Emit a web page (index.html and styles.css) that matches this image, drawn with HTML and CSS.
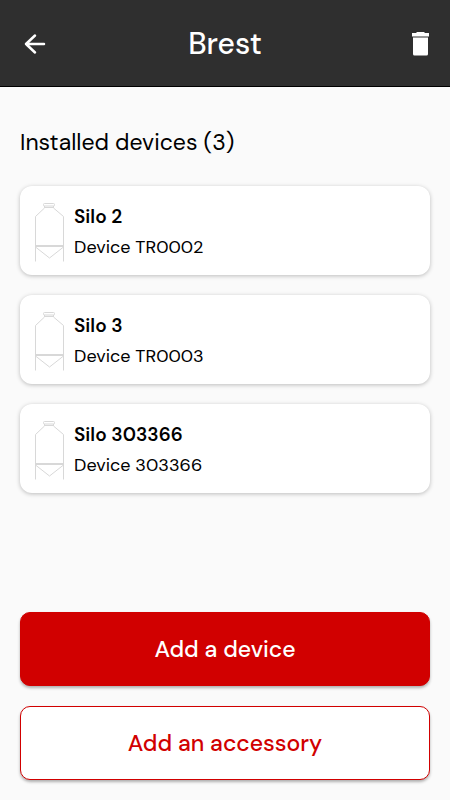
FILE: index.html
```html
<!DOCTYPE html>
<html lang="en">
<head>
    <meta charset="UTF-8">
    <meta name="viewport" content="width=device-width, initial-scale=1.0">
    <title>Brest</title>
    <link rel="stylesheet" href="styles.css">
</head>
<body>
    <!-- Silo drawing shared by the device cards -->
    <svg class="symbols" aria-hidden="true">
        <symbol id="silo" viewBox="0 0 30 60">
            <rect x="9.5" y="1.5" width="11" height="2.5" rx="1"/>
            <path d="M10.5 4v2L1.5 14.500V59.500M19.500 4v2L29.500 14.500V59.500M10.500 5.500h9"/>
            <path d="M1.500 45l14 11 14-11"/>
            <path class="ring" d="M1 44h29"/>
        </symbol>
    </svg>

    <header class="header">
        <a href="#" class="icon-btn" aria-label="Back">
            <svg class="icon" viewBox="0 0 24 24">
                <path class="arrow" d="M21 12H3M12 3.500L3 12l9 8.500"/>
            </svg>
        </a>
        <h1>Brest</h1>
        <button type="button" class="icon-btn" aria-label="Delete">
            <svg class="icon" viewBox="0 0 24 24">
                <path d="M9 0h7l1 1h4v3.500H4V1h4zM5 5.500h15V22q0 1.500-1.500 1.500h-12Q5 23.500 5 22z"/>
            </svg>
        </button>
    </header>

    <main class="content">
        <h2>Installed devices (3)</h2>
        <ul class="device-list">
            <li>
                <a href="#" class="device-card">
                    <svg class="silo"><use href="#silo"/></svg>
                    <span class="device-info">
                        <span class="device-name">Silo 2</span>
                        <span class="device-id">Device TR0002</span>
                    </span>
                </a>
            </li>
            <li>
                <a href="#" class="device-card">
                    <svg class="silo"><use href="#silo"/></svg>
                    <span class="device-info">
                        <span class="device-name">Silo 3</span>
                        <span class="device-id">Device TR0003</span>
                    </span>
                </a>
            </li>
            <li>
                <a href="#" class="device-card">
                    <svg class="silo"><use href="#silo"/></svg>
                    <span class="device-info">
                        <span class="device-name">Silo 303366</span>
                        <span class="device-id">Device 303366</span>
                    </span>
                </a>
            </li>
        </ul>
    </main>

    <footer class="actions">
        <button type="button" class="btn btn-primary">Add a device</button>
        <button type="button" class="btn btn-outline">Add an accessory</button>
    </footer>
</body>
</html>
```

FILE: styles.css
```css
* {
    box-sizing: border-box;
}
body {
    margin: 0;
    min-height: 100vh;
    display: flex;
    flex-direction: column;
    font-family: "DM Sans", Inter, sans-serif;
    background-color: #fafafa;
    color: #000;
}
.symbols {
    display: none;
}
.header {
    display: grid;
    grid-template-columns: 1fr auto 1fr;
    align-items: center;
    padding: 24px 14px 22px;
    background-color: #2f2f2f;
    border-bottom: 1px solid #000;
    color: #fff;
}
.header h1 {
    margin: 0;
    font-size: 30px;
    line-height: 40px;
    font-weight: 500;
}
.icon-btn {
    display: flex;
    padding: 5px 4px 5px 9px;
    border: none;
    background: none;
    color: inherit;
    cursor: pointer;
}
.icon-btn:last-child {
    justify-self: end;
}
.icon {
    width: 24px;
    height: 24px;
    fill: currentColor;
}
.arrow {
    fill: none;
    stroke: currentColor;
    stroke-width: 2.5;
    stroke-linecap: round;
    stroke-linejoin: round;
}
.content {
    flex-grow: 1;
    padding: 40px 20px 20px;
}
.content h2 {
    margin: 0 0 29px;
    font-size: 23px;
    line-height: 30px;
    font-weight: 400;
}
.device-list {
    display: flex;
    flex-direction: column;
    gap: 20px;
    margin: 0;
    padding: 0;
    list-style: none;
}
.device-card {
    display: flex;
    align-items: center;
    gap: 10px;
    padding: 16px 14px 13px;
    background: #fff;
    border-radius: 12px;
    box-shadow: 0 1px 4px rgba(0, 0, 0, 0.25);
    color: inherit;
    text-decoration: none;
}
.silo {
    width: 30px;
    height: 60px;
    fill: none;
    stroke: #d8d8d8;
    stroke-width: 1;
}
.ring {
    stroke-width: 2;
}
.device-info {
    display: flex;
    flex-direction: column;
    font-size: 18px;
    line-height: 30px;
}
.device-name {
    font-size: 19px;
    font-weight: 600;
}
.actions {
    display: flex;
    flex-direction: column;
    gap: 20px;
    padding: 0 20px 20px;
}
.btn {
    padding: 21px 20px;
    border: 1px solid #d10000;
    border-radius: 10px;
    box-shadow: 0 2px 3px rgba(0, 0, 0, 0.3);
    font-family: inherit;
    font-size: 23px;
    line-height: 30px;
    font-weight: 500;
    cursor: pointer;
}
.btn-primary {
    background-color: #d10000;
    color: #fff;
}
.btn-outline {
    background-color: #fff;
    color: #d10000;
}
```
